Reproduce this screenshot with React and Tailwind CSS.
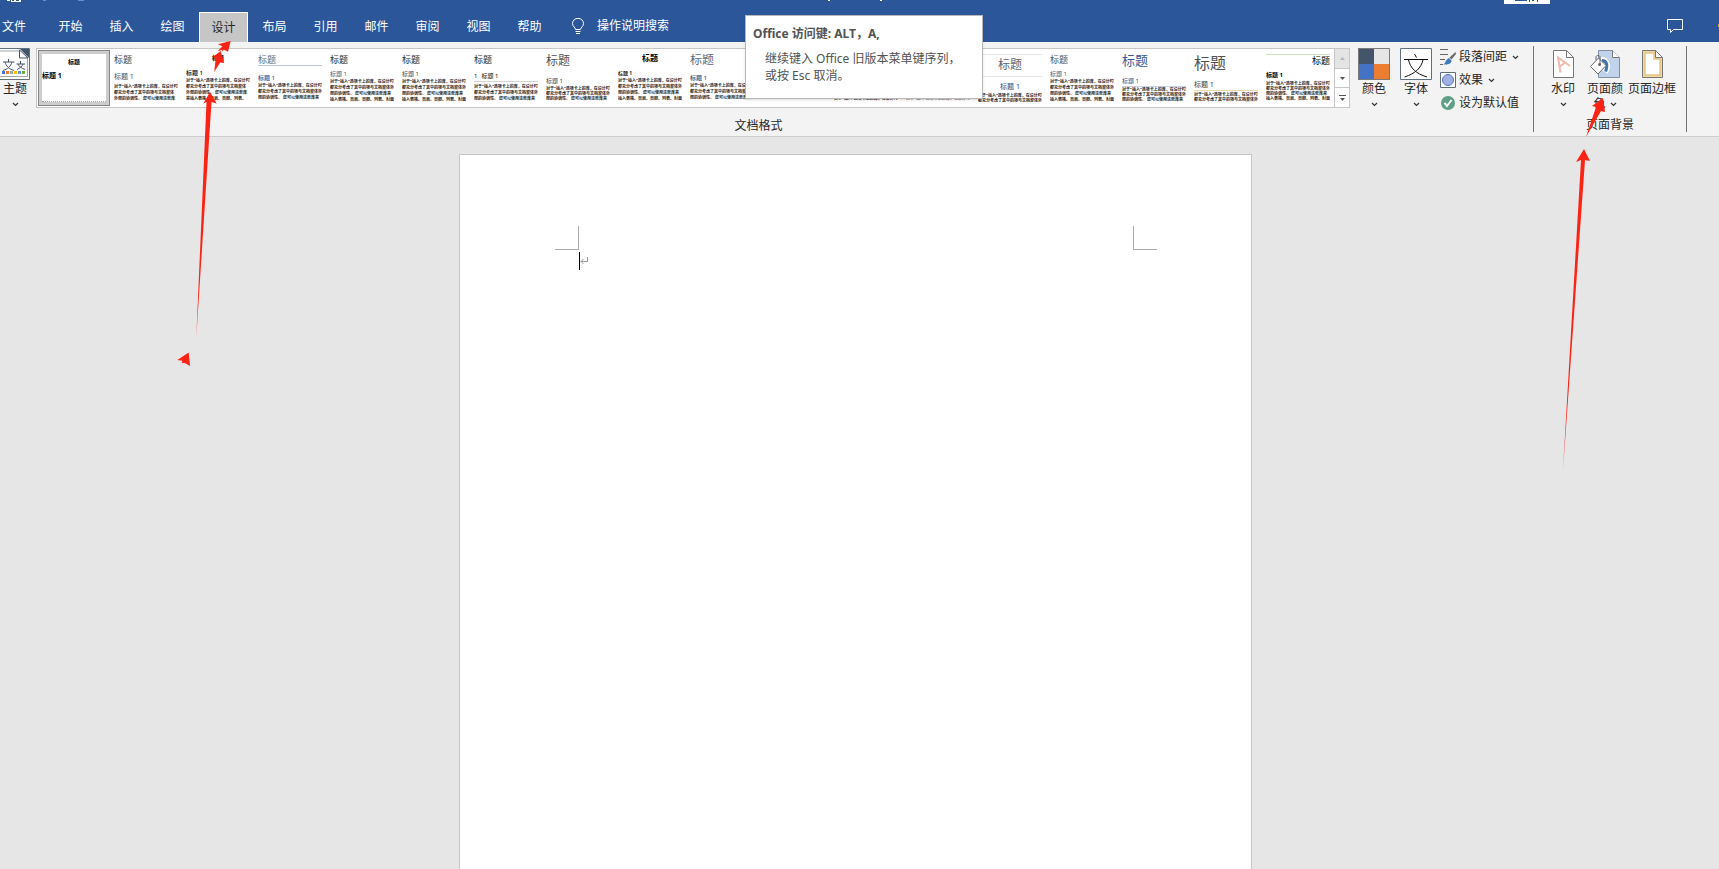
const LINES_A = [
  '对于"插入"选项卡上的库，在设计时',
  '都充分考虑了其中的项与文档整体',
  '外观的协调性。 您可以使用这些库',
  '来插入表格、页眉、页脚、列表、',
];
const LINES_B = [
  '对于"插入"选项卡上的库，在设计时',
  '都充分考虑了其中的项与文档整体外',
  '观的协调性。 您可以使用这些库来',
  '插入表格、页眉、页脚、列表、封面',
];

// thumbnails without a title/heading only show body text
const STYLES = [
  { title: 'h-3 pt-[1px] text-[9px] text-neutral-700', head: 'mt-[5px] text-[7px] leading-3 text-[#44546a]', lines: LINES_A.slice(0, 3), body: 'mt-[1px] leading-[6px]' },
  { title: 'h-3 pt-[1px] text-[6px] font-bold text-center text-black', head: 'mt-[2px] text-[6px] leading-[10px] font-medium text-black', lines: LINES_A, body: 'leading-[6px]' },
  { title: 'h-3 pt-[1px] text-[9px] text-[#5b6b80] border-b border-[#b8c8de]', head: 'mt-[7px] text-[6px] leading-[10px] font-medium text-[#2f5496]', lines: LINES_B.slice(0, 3), body: 'leading-[6px]' },
  { title: 'h-3 pt-[1px] text-[9px] text-neutral-800', head: 'mt-[3px] text-[6px] leading-[10px] text-[#44546a]', lines: LINES_B, body: 'leading-[6px]' },
  { title: 'h-3 pt-[1px] text-[9px] text-neutral-800', head: 'mt-[3px] text-[6px] leading-[10px] text-neutral-700', lines: LINES_B, body: 'leading-[6px]' },
  { title: 'h-3 pt-[1px] text-[9px] text-neutral-800', number: '1', head: 'mt-[5px] text-[6px] leading-[10px] text-black border-b border-neutral-300', lines: LINES_B.slice(0, 3), body: 'mt-[2px] leading-[6px]' },
  { title: 'h-4 pt-[1px] text-[12px] text-neutral-600', head: 'mt-[6px] text-[6px] leading-[10px] text-neutral-700', lines: LINES_B.slice(0, 3), body: 'leading-[5px]' },
  { title: 'h-3 text-[8px] font-bold text-center text-black', head: 'mt-[2px] text-[5px] leading-[10px] font-bold text-neutral-800', lines: LINES_B, body: 'leading-[6px]' },
  { title: 'h-3 text-[12px] text-[#5b6b80]', head: 'mt-[7px] text-[6px] leading-[10px] font-medium text-[#2f4a7a]', lines: LINES_B.slice(0, 3), body: 'leading-[6px]' },
  { lines: [], body: '' },
  { lines: LINES_A.slice(0, 1), body: 'pt-[42px] leading-[6px]' },
  { lines: LINES_A.slice(0, 1), body: 'pt-[42px] leading-[6px] opacity-60' },
  { title: 'h-[23px] pt-[4px] text-[12px] text-center text-[#5b6572] border-y border-neutral-200', head: 'mt-[4px] text-[7px] leading-3 text-center text-[#2f4a7a]', lines: LINES_B.slice(0, 2), body: 'leading-[5px]' },
  { title: 'h-3 pt-[1px] text-[9px] text-[#44546a]', head: 'mt-[3px] text-[6px] leading-[10px] text-[#44546a]', lines: LINES_B, body: 'leading-[6px]' },
  { title: 'h-4 text-[13px] text-[#3b5a94]', head: 'mt-[6px] text-[6px] leading-[10px] text-[#2f4a7a] border-b border-[#c9d6ea]', lines: LINES_B.slice(0, 3), body: 'leading-[5px]' },
  { title: 'h-5 pt-[1px] text-[16px] text-neutral-600', head: 'mt-[6px] text-[7px] leading-[10px] text-neutral-700 border-b border-[#efd9a8]', lines: LINES_B.slice(0, 2), body: 'mt-[1px] leading-[5px]' },
  { title: 'h-3 pt-[1px] text-[9px] text-right text-black border-t border-[#cfe0bf]', head: 'mt-[4px] text-[6px] leading-[10px] font-bold text-black', lines: LINES_B, body: 'mt-[1px] leading-[5px]' },
];

function Chevron() {
  return (
    <svg width="7" height="5" viewBox="0 0 7 5" fill="none" stroke="#333" strokeWidth="1.2">
      <path d="M1 1l2.5 2.5L6 1" />
    </svg>
  );
}

function StyleThumb({ item }) {
  return (
    <button type="button" className="flex w-[72px] shrink-0 items-start px-1 pt-[5px] text-left">
      <div className="flex h-12 w-16 flex-col overflow-hidden whitespace-nowrap">
        {item.title && <div className={`shrink-0 leading-none ${item.title}`}>标题</div>}
        {item.head && (
          <div className={`shrink-0 ${item.head}`}>
            {item.number && <span className="mr-1">{item.number}</span>}标题 1
          </div>
        )}
        <div className={`text-[4px] font-bold text-neutral-800 ${item.body}`}>
          {item.lines.map((line) => <div key={line}>{line}</div>)}
        </div>
      </div>
    </button>
  );
}

function BigButton({ label, icon, arrow = true, className = '' }) {
  return (
    <button type="button" className={`flex shrink-0 flex-col items-center ${className}`}>
      {icon}
      <span className="whitespace-nowrap text-[12px] leading-[18px]">{label}</span>
      {arrow && <span className="mt-1"><Chevron /></span>}
    </button>
  );
}

function ThemeIcon() {
  return (
    <svg width="30" height="32" viewBox="0 0 30 32">
      <path d="M-2 .5H29.500V31.500H-2z" fill="#fff" stroke="#5f7083" />
      <path d="M-1 3H20L27.500 10.500V28.500H-1" fill="#fff" stroke="#9aa5b1" />
      <path d="M19.500 2V10H28z" fill="#fff" stroke="#44546a" />
      <path d="M20 1H29V10z" fill="#44546a" />
      <g fill="none" stroke="#44546a" strokeWidth="1">
        <path d="M8.500 11v3M3 14h11.500M5 14c1 4 4 7 9 8.500M12 14c-1 4-4 7-9 8.500" />
        <path d="M20.500 13v3M16.500 16h8.500M18 16c1 2.500 3 4 7 5.500M23 16c-1 2.500-3 4-6 5.500" />
      </g>
      <path d="M2 23h3v3H2z" fill="#4472c4" /><path d="M6 23h3v3H6z" fill="#ed7d31" />
      <path d="M10 23h3v3h-3z" fill="#a5a5a5" /><path d="M14 23h3v3h-3z" fill="#ffc000" />
      <path d="M18 23h3v3h-3z" fill="#5b9bd5" /><path d="M22 23h3v3h-3z" fill="#70ad47" />
    </svg>
  );
}

function ColorsIcon() {
  return (
    <svg width="32" height="32" viewBox="0 0 32 32">
      <path fill="#44546a" d="M0 0h16v16H0z" /><path fill="#e7e6e6" d="M16 0h16v16H16z" />
      <path fill="#4472c4" d="M0 16h16v16H0z" /><path fill="#ed7d31" d="M16 16h16v16H16z" />
      <path d="M.5.5h31v31H.5z" fill="none" stroke="#7a7a7a" />
    </svg>
  );
}

function FontsIcon() {
  return (
    <svg width="32" height="32" viewBox="0 0 32 32" fill="none">
      <path d="M.5.5h31v31H.5z" fill="#fff" stroke="#5f7083" />
      <path d="M14.500 6l2 3.500M4 11.500h24M8.500 12c2 8 7 13.500 18.500 17M23 12c-2 8-7.500 13.500-18.500 17" stroke="#111" />
    </svg>
  );
}

function SpacingIcon() {
  return (
    <svg width="16" height="16" viewBox="0 0 16 16">
      <path d="M0 .5h8M0 5.500h8M0 10.500h5M0 15.500h3" stroke="#666" />
      <path d="M15.500 3L9.500 8.500l2 2L16 5z" fill="#6a6a6a" />
      <path d="M9 9l2.500 2.500c0 3-3 4.500-8 4 2-1 2-5 5.500-6.500z" fill="#3f7ab8" />
    </svg>
  );
}

function EffectsIcon() {
  return (
    <svg width="16" height="16" viewBox="0 0 16 16">
      <path d="M.5.5h15v15H.5z" fill="#fff" stroke="#5f7083" />
      <circle cx="8" cy="8" r="5.500" fill="#9fb1e0" stroke="#5b78c4" />
    </svg>
  );
}

function CheckIcon() {
  return (
    <svg width="16" height="16" viewBox="0 0 16 16" fill="none">
      <circle cx="8" cy="8" r="7" fill="#5f9f86" />
      <path d="M4.500 8l2.500 3 4.500-6" stroke="#fff" strokeWidth="2" />
    </svg>
  );
}

function WatermarkIcon() {
  return (
    <svg width="32" height="32" viewBox="0 0 32 32" fill="none">
      <path d="M6.500 2.500h13l7 7v20h-20z" fill="#fff" stroke="#777" />
      <path d="M19.500 2.500v7h7" stroke="#777" />
      <path d="M13.500 24.500L11 9.500 23 18M12.500 18.500l6-4" stroke="#efb9ad" strokeWidth="2" />
    </svg>
  );
}

function PageColorIcon() {
  return (
    <svg width="32" height="32" viewBox="0 0 32 32" fill="none">
      <path d="M9.500 2.500h14l7 7v20h-21z" fill="#c0d3ea" stroke="#7f8fa5" />
      <path d="M23.500 2.500v7h7" fill="#fff" stroke="#777" />
      <path d="M12 12c6 0 8 5 4 12" stroke="#fff" strokeWidth="6" />
      <path d="M13 12.500c5 0 6 5 3.500 11" stroke="#3f74ae" strokeWidth="3" />
      <path d="M1.500 18.500L9.500 10l7.500 7.500L9 26z" fill="#fff" stroke="#666" />
      <path d="M7 12V9c0-2 4-2 4 0v7" stroke="#666" />
      <circle cx="10.500" cy="16.500" r="1.500" fill="#666" />
    </svg>
  );
}

function BorderIcon() {
  return (
    <svg width="32" height="32" viewBox="0 0 32 32" fill="none">
      <path d="M6.500 2.500h13l7 7v20h-20z" fill="#fff" stroke="#777" />
      <path d="M8.500 4.500h10v6h6v17h-16z" stroke="#ecc888" strokeWidth="2.500" />
      <path d="M19.500 2.500v7h7z" fill="#fff" stroke="#777" />
    </svg>
  );
}

function Header() {
  const tabs = ['开始', '插入', '绘图', '设计', '布局', '引用', '邮件', '审阅', '视图', '帮助'];
  return (
    <header className="relative flex h-[42px] items-end overflow-hidden bg-[#2b579a] text-[12px] text-white">
      <svg className="absolute left-[7px] top-0" width="90" height="2"><path d="M0 0h3v1H0zM4 0h1v2H4zM7 0h2v1H7zM12 0h2v2h-2zM4 1h10v1H4z" fill="#fff" /><path d="M36 0h3v1h-3zM71 0h6v1h-6z" fill="#6d8fc4" /></svg>
      <svg className="absolute left-[827px] top-0" width="60" height="1"><path d="M1 0h2v1H1zM53 0h2v1h-2z" fill="#fff" /></svg>
      <button type="button" aria-label="登录" className="absolute right-[169px] top-0 h-1 w-[46px] bg-white">
        <svg className="absolute left-[11px] top-0" width="26" height="2"><path d="M0 0h12v1H0zM14 0h1v2h-1zM17 0h2v1h-2zM22 0h1v2h-1z" fill="#2b579a" /></svg>
      </button>
      <nav className="flex items-end gap-[2px]">
        <button type="button" className="h-[30px] w-11 pl-[2px] text-left">文件</button>
        {tabs.map((tab) => (
          <button
            key={tab}
            type="button"
            className={`h-[30px] w-[49px] ${tab === '设计' ? 'border border-b-0 border-white bg-[#c6c6c6] text-neutral-800' : ''}`}
          >
            {tab}
          </button>
        ))}
      </nav>
      <button type="button" className="ml-[17px] flex h-[30px] items-center gap-3 pb-[2px]">
        <svg width="14" height="17" viewBox="0 0 14 17" fill="none" stroke="#fff">
          <path d="M4.500 11.500c0-2-3-3-3-6a5.300 5 0 0111 0c0 3-3 4-3 6zM4.500 13.500h5M5 15.500h4" />
        </svg>
        操作说明搜索
      </button>
      <button type="button" aria-label="批注" className="mb-2 ml-auto mr-[35px]">
        <svg width="17" height="15" viewBox="0 0 17 15" fill="none" stroke="#fff">
          <path d="M.5.500h15v10h-9l-3 3v-3h-3z" />
        </svg>
      </button>
      <span className="absolute right-0 top-6 h-[3px] w-[1px] bg-[#ed9b31]" />
    </header>
  );
}

function Gallery() {
  return (
    <div className="flex h-[60px] min-w-0 flex-1 border border-[#c6c6c6] bg-white">
      <div className="flex min-w-0 flex-1 overflow-hidden pl-[1px]">
        <button type="button" className="mt-[1px] h-14 w-[72px] shrink-0 border border-[#868686] bg-[#cdcdcd] p-[3px] text-left">
          <div className="flex h-full flex-col overflow-hidden bg-white text-black">
            <div className="mt-[3px] text-center text-[6px] font-bold leading-[10px]">标题</div>
            <div className="mt-[4px] text-[7px] font-bold leading-[10px]">标题 1</div>
            <div className="mt-auto border-b border-dotted border-neutral-400" />
          </div>
        </button>
        {STYLES.map((item, i) => <StyleThumb key={i} item={item} />)}
      </div>
      <div className="flex w-[15px] shrink-0 flex-col divide-y divide-[#c6c6c6] border-l border-[#c6c6c6]">
        <button type="button" aria-label="上一行" className="flex flex-1 items-center justify-center bg-[#e4e4e4]">
          <svg width="5" height="3"><path d="M0 3L2.500 0 5 3z" fill="#b5b5b5" /></svg>
        </button>
        <button type="button" aria-label="下一行" className="flex flex-1 items-center justify-center">
          <svg width="5" height="3"><path d="M0 0L2.500 3 5 0z" fill="#555" /></svg>
        </button>
        <button type="button" aria-label="其他" className="flex flex-1 items-center justify-center">
          <svg width="7" height="6"><path d="M0 0h7v1H0zM1 3l2.500 3L6 3z" fill="#555" /></svg>
        </button>
      </div>
    </div>
  );
}

function Ribbon() {
  return (
    <section className="flex border-b border-[#cdcdcd] bg-[#f3f3f3] text-[12px] text-neutral-800">
      <div className="min-w-0 flex-1 pt-1.5">
        <div className="flex h-[68px] items-start">
          <BigButton label="主题" icon={<ThemeIcon />} className="mr-1.5 w-[30px]" />
          <Gallery />
          <BigButton label="颜色" icon={<ColorsIcon />} className="ml-2" />
          <BigButton label="字体" icon={<FontsIcon />} className="ml-2.5" />
          <div className="ml-2 flex w-[93px] shrink-0 flex-col gap-[5px] whitespace-nowrap leading-[18px]">
            <button type="button" className="flex items-center gap-[3px]"><SpacingIcon />段落间距<span className="ml-[2px]"><Chevron /></span></button>
            <button type="button" className="flex items-center gap-[3px]"><EffectsIcon />效果<span className="ml-[2px]"><Chevron /></span></button>
            <button type="button" className="flex items-center gap-[3px]"><CheckIcon />设为默认值</button>
          </div>
        </div>
        <div className="pr-4 text-center leading-5">文档格式</div>
      </div>
      <div className="my-1 w-[154px] shrink-0 border-x border-neutral-500 pt-[2px]">
        <div className="flex h-[70px] items-start pl-[13px]">
          <BigButton label="水印" icon={<WatermarkIcon />} />
          <button type="button" className="ml-2 flex w-9 flex-col items-center">
            <PageColorIcon />
            <span className="text-[12px] leading-[18px]">页面颜</span>
            <span className="flex items-center gap-1 text-[12px] leading-3">色<Chevron /></span>
          </button>
          <BigButton label="页面边框" icon={<BorderIcon />} arrow={false} className="ml-[5px]" />
        </div>
        <div className="text-center leading-[14px]">页面背景</div>
      </div>
      <div className="w-8 shrink-0" />
    </section>
  );
}

function Tooltip() {
  return (
    <div role="tooltip" className="absolute left-[745px] top-[15px] h-[84px] w-[238px] border border-[#b8b8b8] bg-white px-[7px] pt-2 text-[12px] text-neutral-600 shadow-sm">
      <p className="font-bold leading-5">Office 访问键: ALT，A,</p>
      <p className="mt-[6px] pl-3 leading-[17px]">继续键入 Office 旧版本菜单键序列，<br />或按 Esc 取消。</p>
    </div>
  );
}

function Arrows() {
  return (
    <>
      <svg className="pointer-events-none absolute left-[170px] top-[36px]" width="70" height="340" viewBox="170 36 70 340" fill="#fb2314">
        <path d="M230.700 41L218 44.300l4.500 2-5 5 5-1.500-1 2 2.500-2 4 2z" />
        <path d="M220.700 51l-8 6 3 1.500-1.500 13.500 6-9.500 4 .5z" />
        <path d="M210 92l-6.700 11.500 3.200-1.500-10.200 235 15.200-235 5.200 1.500z" />
        <path d="M188.700 352.500L177.300 360l5 .700-.6 2.600 2.600-.6 5.700 3.300z" />
      </svg>
      <svg className="pointer-events-none absolute right-[89px] top-[94px]" width="70" height="380" viewBox="1560 94 70 380" fill="#fb2314">
        <path d="M1603 98l-11 8 4 1-10 30 15-26 4 1z" />
        <path d="M1584 149l-8 13 5-2-18 310 22-310 5 1z" />
      </svg>
    </>
  );
}

export default function App() {
  return (
    <div className="relative flex min-h-screen flex-col overflow-hidden bg-[#e6e6e6] font-['Noto_Sans','Noto_Sans_CJK_SC',sans-serif]">
      <Header />
      <Ribbon />
      <main className="flex flex-1 justify-center pr-2 pt-[17px]">
        <article className="w-[793px] border border-b-0 border-[#c6c6c6] bg-white pl-[95px] pr-[94px] pt-[71px]">
          <div className="flex justify-between">
            <span className="h-6 w-6 border-b border-r border-[#ababab]" />
            <span className="h-6 w-6 border-b border-l border-[#ababab]" />
          </div>
          <p className="ml-6 mt-[2px] flex items-center">
            <span className="h-[18px] w-[1px] bg-black" />
            <svg width="8" height="8" viewBox="0 0 8 8" fill="none" stroke="#999"><path d="M7.500 0v4.500H1M3.500 2L1 4.500 3.500 7" /></svg>
          </p>
        </article>
      </main>
      <Tooltip />
      <Arrows />
    </div>
  );
}
